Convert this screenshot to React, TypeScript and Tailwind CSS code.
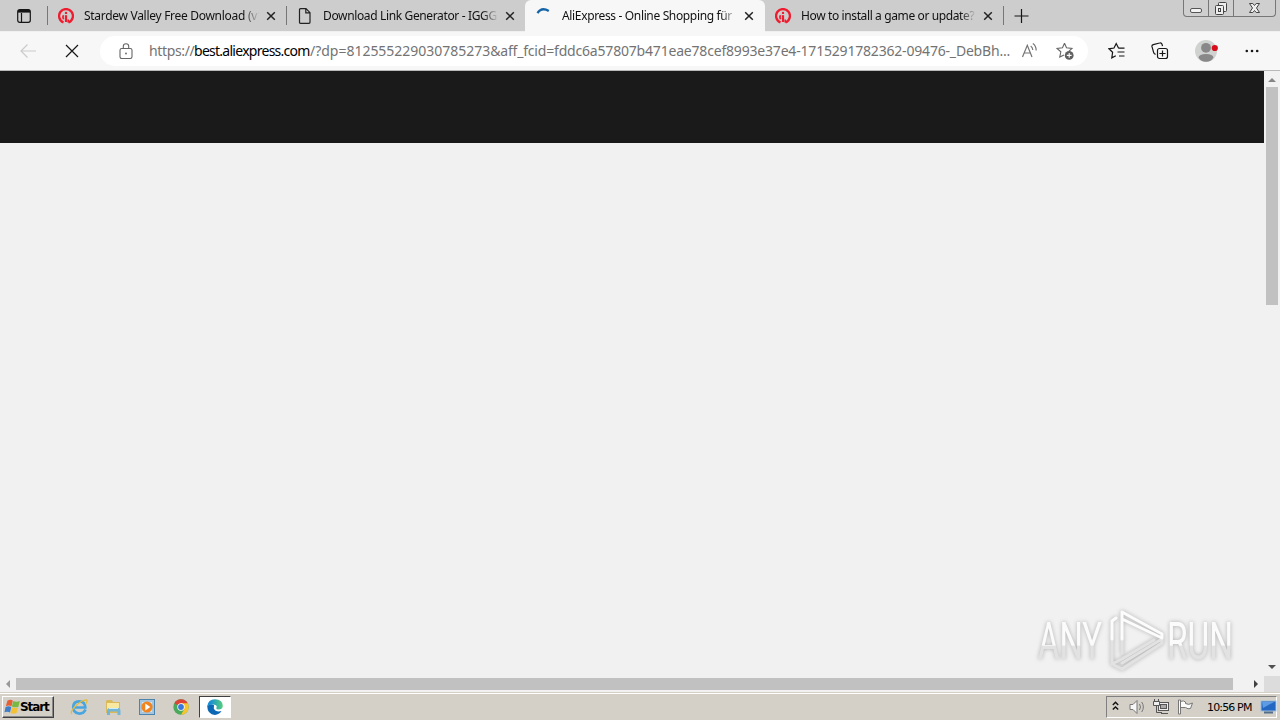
import React from 'react';

interface IconProps {
  className?: string;
}

const FONT = "font-['Noto_Sans','Open_Sans',sans-serif]";

const SiteLogo: React.FC = () => (
  <svg width="16" height="16" viewBox="0 0 16 16" className="shrink-0" fill="none" stroke="#ee1c2e">
    <path d="M5.500 14.400A6.900 6.900 0 1 1 10.500 14.400" strokeWidth="2.300" />
    <path d="M8 7.200V14" strokeWidth="2.200" />
    <path d="M5.600 7.300Q4.200 9 5.600 11.200M10.200 14.500V11.500" strokeWidth="1.600" />
    <circle cx="8" cy="4.900" r="1.200" fill="#ee1c2e" stroke="none" />
  </svg>
);

const PageIcon: React.FC = () => (
  <svg width="16" height="16" viewBox="0 0 16 16" className="shrink-0" fill="none" stroke="#222" strokeWidth="1.2">
    <path d="M3.500.7h5.500l4 4v9.600q0 1-1 1H3.500q-1 0-1-1V1.700q0-1 1-1zM8.800.8v4.100h4.200" />
  </svg>
);

const Spinner: React.FC = () => (
  <svg width="16" height="16" viewBox="0 0 16 16" className="shrink-0" fill="none" stroke="#1664a8" strokeWidth="2.4">
    <path d="M1.500 5.200Q5.500-1.300 12.800 3" />
  </svg>
);

const CloseIcon: React.FC = () => (
  <svg width="10" height="10" viewBox="0 0 10 10" className="shrink-0" stroke="#222" strokeWidth="1.5">
    <path d="M1.200 1.200l7.600 7.600M8.800 1.200L1.200 8.800" />
  </svg>
);

const StarIcon: React.FC<IconProps> = ({ className }) => (
  <svg width="18" height="18" viewBox="0 0 18 18" className={className} fill="none" stroke="#666" strokeWidth="1.1">
    <path d="M8.500 1.300l2 4.400 5.500.7-3.200 3M8.500 1.300l-2 4.400-5.500.7 3.800 3.400-1 5.300 4.200-2.200" />
    <circle cx="13.200" cy="13.400" r="4.400" fill="#606060" stroke="none" />
    <path d="M10.800 13.400h4.800M13.200 11v4.800" stroke="#fff" />
  </svg>
);

const FavoritesIcon: React.FC<IconProps> = ({ className }) => (
  <svg width="18" height="18" viewBox="0 0 18 18" className={className} fill="none" stroke="#161616" strokeWidth="1.2">
    <path d="M10.500 6.100l-2.300-4.600-2.200 4.500-5 .8 3.600 3.500-.8 5.500 4-2.100M10.300 6.100h6.200M9.500 10h7M11 14h5.500" />
  </svg>
);

const CollectionsIcon: React.FC<IconProps> = ({ className }) => (
  <svg width="18" height="18" viewBox="0 0 18 18" className={className} fill="none" stroke="#161616" strokeWidth="1.2">
    <rect x="6.500" y="6.500" width="10" height="10" rx="2" />
    <path d="M11.500 8.400v6.200M8.400 11.500h6.200M4.600 12.400q-1.700-.5-2-2L1 4.700q-.4-1.600 1.200-2.100L8.600 1q1.800-.5 2.400 1.200l.5 1.900" />
  </svg>
);

const ReadAloudIcon: React.FC<IconProps> = ({ className }) => (
  <svg width="18" height="18" viewBox="0 0 18 18" className={className} fill="none" stroke="#757575" strokeWidth="1.2">
    <path d="M1.500 15L6.300 3.300 11 15M3 11h6.600M9.700 3.900q2 1.300 2.100 4.200M11.800 1.600q3.200 2 3.400 6.800" />
  </svg>
);

interface TabProps {
  icon: React.ReactNode;
  title: string;
  className: string;
  titleClass: string;
}

const Tab: React.FC<TabProps> = ({ icon, title, className, titleClass }) => (
  <div className={`flex h-8 shrink-0 items-center ${className}`}>
    {icon}
    <div
      className={`ml-[10px] w-[177px] whitespace-nowrap text-[12px] leading-4 text-[#111] [mask-image:linear-gradient(to_right,black_90%,transparent_99%)] ${titleClass}`}
    >
      {title}
    </div>
    <div className="ml-[5px] flex">
      <CloseIcon />
    </div>
  </div>
);

const WindowControls: React.FC = () => (
  <div className="ml-auto mr-1 flex h-[17px] w-[93px] self-start rounded-b border border-t-0 border-[#777] bg-[#cfcfcf]">
    <div className="flex w-[25px] items-center justify-center border-r border-[#777]">
      <svg width="13" height="16" viewBox="0 0 13 16" className="shrink-0" fill="#f2f2f2" stroke="#555">
        <rect x=".5" y="8.500" width="11" height="4" rx="1.500" />
      </svg>
    </div>
    <div className="flex w-[25px] items-center justify-center border-r border-[#777]">
      <svg width="14" height="16" viewBox="0 0 14 16" className="shrink-0" fill="#eee" stroke="#444">
        <rect x="4.500" y="2.500" width="8" height="9" rx="1" />
        <rect x="1.500" y="5.500" width="8" height="9" rx="1" />
        <rect x="4.500" y="8.500" width="2" height="3" />
      </svg>
    </div>
    <div className="flex flex-1 items-center justify-center">
      <svg width="14" height="16" viewBox="0 0 14 16" className="shrink-0" fill="#eee" stroke="#444">
        <path d="M1.500 3.500h3.300L6.500 5.500l1.700-2h3.300L8.500 8l3 4.500H8.200l-1.700-2-1.700 2H1.500l3-4.500z" />
      </svg>
    </div>
  </div>
);

const Separator: React.FC = () => <div className="h-[19px] w-px shrink-0 bg-[#777]" />;

const TabStrip: React.FC = () => (
  <div className="flex h-8 items-center border-b border-[#f0f0f0] bg-[#cdcdcd]">
    <div className="flex w-[47px] shrink-0 items-center pl-[17px]">
      <svg width="14" height="14" viewBox="0 0 14 14" fill="none" stroke="#161616" strokeWidth="1.2">
        <rect x=".7" y=".7" width="12.600" height="12.600" rx="2" />
        <path d="M4.500 4v9" />
        <path d="M1 2.300h12" strokeWidth="2.600" />
      </svg>
    </div>
    <Separator />
    <Tab icon={<SiteLogo />} title="Stardew Valley Free Download (v1" className="w-[238px] pl-[10px]" titleClass="tracking-[-0.29px]" />
    <Separator />
    <Tab icon={<PageIcon />} title="Download Link Generator - IGGG" className="w-[238px] pl-[10px]" titleClass="tracking-[-0.36px]" />
    <Tab
      icon={<Spinner />}
      title="AliExpress - Online Shopping für"
      className="w-[240px] rounded-t-md bg-[#f7f7f7] pl-[11px]"
      titleClass="tracking-[-0.35px]"
    />
    <Tab icon={<SiteLogo />} title="How to install a game or update?" className="w-[238px] pl-[10px]" titleClass="tracking-[-0.38px]" />
    <Separator />
    <svg width="16" height="16" viewBox="0 0 16 16" className="ml-[10px] shrink-0" stroke="#161616" strokeWidth="1.2">
      <path d="M7.500 1v14M.5 8h14" />
    </svg>
    <WindowControls />
  </div>
);

const Toolbar: React.FC = () => (
  <div className="flex h-[39px] items-center border-b border-[#b9b9b9] bg-[#f7f7f7]">
    <svg width="18" height="16" viewBox="0 0 18 16" className="ml-5 shrink-0" fill="none" stroke="#cbcbcb" strokeWidth="1.2">
      <path d="M16 8H1M7.500 1.500L1 8l6.500 6.500" />
    </svg>
    <svg width="14" height="14" viewBox="0 0 14 14" className="ml-[27px] shrink-0" stroke="#161616" strokeWidth="1.2">
      <path d="M1 1l12 12M13 1L1 13" />
    </svg>
    <div className="ml-[21px] flex h-[30px] w-[988px] shrink-0 items-center rounded-full bg-white">
      <svg width="14" height="17" viewBox="0 0 14 17" className="ml-[19px] shrink-0" fill="none" stroke="#666" strokeWidth="1.1">
        <rect x="1" y="5.500" width="12" height="10" rx="1.700" />
        <path d="M4.300 5.500V3.200q0-2.400 2.700-2.400t2.700 2.400v2.300" />
        <circle cx="7" cy="10.500" r=".9" fill="#666" stroke="none" />
      </svg>
      <div className="ml-4 flex w-[872px] shrink-0 whitespace-nowrap text-[14px] leading-5 text-[#737373]">
        <span className="w-[45px] tracking-[-0.35px]">https://</span>
        <span className="w-[116px] tracking-[-0.73px] text-black">best.aliexpress.com</span>
        <span className="tracking-[-0.02px]">/?dp=812555229030785273</span>
        <span className="tracking-[-0.19px]">
          &amp;aff_fcid=fddc6a57807b471eae78cef8993e37e4-1715291782362-09476-_DebBh...
        </span>
      </div>
      <ReadAloudIcon className="shrink-0" />
      <StarIcon className="ml-[17px] shrink-0" />
    </div>
    <FavoritesIcon className="ml-5 shrink-0" />
    <CollectionsIcon className="ml-[25px] shrink-0" />
    <svg width="23" height="22" viewBox="0 0 23 22" className="ml-[26px] shrink-0">
      <circle cx="11" cy="11" r="11" fill="#d0d2d0" />
      <circle cx="11" cy="7.800" r="4.900" fill="#888" />
      <path d="M3.500 17.500Q4 14 11 14t7.500 3.500Q16 21.800 11 21.800T3.500 17.500z" fill="#888" />
      <circle cx="19.800" cy="8" r="3.100" fill="#d80d1c" />
    </svg>
    <svg width="14" height="4" viewBox="0 0 14 4" className="ml-[27px] shrink-0" fill="#161616">
      <circle cx="1.800" cy="2" r="1.300" />
      <circle cx="7" cy="2" r="1.300" />
      <circle cx="12.200" cy="2" r="1.300" />
    </svg>
  </div>
);

const Watermark: React.FC = () => (
  <svg
    width="212"
    height="74"
    viewBox="0 0 212 74"
    className="absolute bottom-px right-[18px] drop-shadow-[0_0_2px_rgba(0,0,0,0.28)]"
  >
    <defs>
      <linearGradient id="letters" x1="0" y1="0" x2="0" y2="1">
        <stop offset="0.56" stopColor="#fbfbfb" />
        <stop offset="0.58" stopColor="#e2e2e2" />
      </linearGradient>
    </defs>
    <g fill="url(#letters)" fontFamily="Roboto, sans-serif" fontSize="51">
      <text x="4" y="58" textLength="64" lengthAdjust="spacingAndGlyphs">ANY</text>
      <text x="133" y="58" textLength="66" lengthAdjust="spacingAndGlyphs">RUN</text>
    </g>
    <g fill="none" strokeLinejoin="round" strokeLinecap="round" strokeWidth="3">
      <path d="M78 36v27l10-5 32-19M128 38L88 62M128 38v4L88 68l-8-4M88 36v16" stroke="#e2e2e2" />
      <path d="M88 38V11l40 22v4L88 18M82 17l-4 3v18" stroke="#fcfcfc" />
    </g>
  </svg>
);

const Viewport: React.FC = () => (
  <div className="flex h-[621px] flex-col bg-[#f1f1f1]">
    <div className="flex h-[605px]">
      <div className="relative w-[1264px] bg-[#f1f1f1]">
        <div className="h-[72px] bg-[#1a1a1a]" />
        <Watermark />
      </div>
      <div className="flex w-4 flex-col items-center bg-[#f1f1f1]">
        <svg width="16" height="16" viewBox="0 0 16 16" fill="#858585">
          <path d="M4 11l4-4 4 4z" />
        </svg>
        <div className="h-[218px] w-3 bg-[#c1c1c1]" />
        <svg width="16" height="16" viewBox="0 0 16 16" className="mt-auto" fill="#505050">
          <path d="M4 5h8L8 9z" />
        </svg>
      </div>
    </div>
    <div className="flex h-4 items-center">
      <svg width="16" height="16" viewBox="0 0 16 16" fill="#999">
        <path d="M10 4v8L6 8z" />
      </svg>
      <div className="h-3 w-[1217px] bg-[#c1c1c1]" />
      <svg width="16" height="16" viewBox="0 0 16 16" className="ml-[15px]" fill="#404040">
        <path d="M6 4v8l4-4z" />
      </svg>
      <div className="h-4 w-4 bg-[#dcdcdc]" />
    </div>
  </div>
);

const Taskbar: React.FC = () => (
  <div className="flex h-7 items-center border-t border-[#d4d0c8] bg-[#d4d0c8] shadow-[inset_0_1px_0_#fff]">
    <div className="ml-[2px] mt-px flex h-[22px] w-[52px] shrink-0 items-center border border-b-[#404040] border-l-white border-r-[#404040] border-t-white pl-px shadow-[inset_-1px_-1px_0_#888]">
      <svg width="17" height="16" viewBox="0 0 16 16" className="shrink-0">
        <path d="M3 1.500q3-1.500 5.300 0L7 7.200Q4 5.700 1.300 7.200z" fill="#e66035" />
        <path d="M8.700 1.900q3 1.500 6.600.2l-1.500 5.800Q10 8.900 7.400 7.400z" fill="#79b943" />
        <path d="M1.100 7.900q3-1.300 5.700 0L5.500 13.600Q3 12.200 0 13.300z" fill="#3e7ec9" />
        <path d="M7.300 8.200q3 1.500 6.200.5l-1.500 5.300q-3 1.300-6 0z" fill="#f4c136" />
      </svg>
      <span className="-ml-px font-['DejaVu_Sans','Liberation_Sans',sans-serif] text-[12px] font-bold leading-4 tracking-[-1.1px] text-black">
        Start
      </span>
    </div>
    <svg width="18" height="18" viewBox="0 0 18 18" className="ml-4 shrink-0" fill="none">
      <path d="M15.500 11.500Q13.500 16 8.800 15.500 3 14.500 3.200 9T9 3.300q6.300 0 6.300 6.200H5" stroke="#48a5df" strokeWidth="2.700" />
      <path d="M2 16Q-.5 14 5.500 8T16.500 1.800Q18 2.800 15.500 6" stroke="#e4bc3d" strokeWidth="1.300" />
    </svg>
    <svg width="18" height="18" viewBox="0 0 18 18" className="ml-4 shrink-0">
      <path d="M2 3l1-1h5l1 2h7v11H2z" fill="#d9b95a" />
      <path d="M3 5h12v8H3z" fill="#f8e8a0" />
      <path d="M3 17v-4q0-3 3-3h8q2.500 0 2.500 3v4h-3v-3.500H6V17z" fill="#72b5d7" />
      <path d="M5 10.500h9" stroke="#c9eefb" />
    </svg>
    <svg width="16" height="16" viewBox="0 0 16 16" className="ml-[17px] shrink-0">
      <rect x=".5" y=".5" width="15" height="15" fill="#a5c6de" stroke="#4c84b0" />
      <path d="M3 3h10v10H3z" fill="#d3e4ef" />
      <circle cx="8" cy="8" r="5.600" fill="#f08420" />
      <path d="M6.300 4.500v7l5-3.500z" fill="#fff" />
    </svg>
    <svg width="16" height="16" viewBox="0 0 16 16" className="ml-[18px] shrink-0">
      <circle cx="8" cy="8" r="7.700" fill="#4aa95a" />
      <path d="M8 8L1.300 4.200A7.700 7.700 0 0 1 14.700 4.200z" fill="#dc4437" />
      <path d="M8 4.200h6.700A7.700 7.700 0 0 1 8 15.700L11.300 10z" fill="#f9c52c" />
      <circle cx="8" cy="8" r="3.700" fill="#fff" />
      <circle cx="8" cy="8" r="2.900" fill="#3979dd" />
    </svg>
    <div className="ml-[10px] mt-px flex h-[22px] w-8 shrink-0 items-center justify-center border border-b-white border-l-[#404040] border-r-white border-t-[#404040] bg-white">
      <svg width="16" height="16" viewBox="0 0 16 16">
        <defs>
          <linearGradient id="edge" x1="0" y1="0" x2="1" y2="0">
            <stop offset="0.2" stopColor="#198fd4" />
            <stop offset="1" stopColor="#55cf7a" />
          </linearGradient>
        </defs>
        <path d="M.2 7Q3 4 7 6L6.800 9.500q1.800 4 7.700 2.600Q12 15.900 8 15.900.4 15.500.2 7z" fill="#0c68b4" />
        <path d="M.2 7.300Q1 .3 8 .2q7.500.3 7.800 6.500 0 3.700-4.300 3.800-2.500 0-2.200-1.300Q11 6 6.500 5.400 2 5.200.2 7.300z" fill="url(#edge)" />
      </svg>
    </div>
    <div className="ml-auto mr-[3px] mt-px flex h-[22px] w-[171px] items-center border border-b-white border-l-[#808080] border-r-white border-t-[#808080]">
      <svg width="7" height="10" viewBox="0 0 7 10" className="mb-[3px] ml-[5px] shrink-0" fill="none" stroke="#111" strokeWidth="1.400">
        <path d="M.8 4l2.700-2.700L6.200 4M.8 8.600l2.700-2.700 2.700 2.700" />
      </svg>
      <svg width="18" height="16" viewBox="0 0 18 16" className="ml-[10px] shrink-0" fill="#f7f7f7" stroke="#777">
        <path d="M1 5.500h3l4-4v13l-4-4H1z" />
        <path d="M10.500 5q2 3 0 6M12.700 3q3.300 5 0 10" fill="none" />
      </svg>
      <svg width="18" height="16" viewBox="0 0 18 16" className="ml-[6px] shrink-0" fill="#eee" stroke="#555">
        <rect x="5.500" y="3.500" width="10" height="8" />
        <rect x="7.500" y="5.500" width="6" height="4" fill="#aaa" />
        <path d="M8 14.500h7M3.500 7v6.500H9M1.500 0v3M5.500 0v3" fill="none" />
        <path d="M.5 2.500h6v4h-6z" />
      </svg>
      <svg width="17" height="16" viewBox="0 0 17 16" className="ml-[6px] shrink-0" fill="#fafafa" stroke="#777">
        <path d="M1.500 1h2v14h-2zM3.500 2.500q3-1.500 5 .5v1.500q3 2 7-.500l-2 5.500q-2.500 1-5-1H3.500z" />
      </svg>
      <span className="ml-[13px] mt-px w-[46px] shrink-0 whitespace-nowrap font-['DejaVu_Sans','Liberation_Sans',sans-serif] text-[11px] leading-4 tracking-[-0.85px] text-black">
        10:56 PM
      </span>
      <svg width="17" height="14" viewBox="0 0 17 14" className="ml-[7px] shrink-0">
        <rect x="1" y="1" width="15" height="10" fill="#2467c2" stroke="#9cbddb" />
        <path d="M2 2h12L3 8z" fill="#5d9be4" />
        <path d="M4 12.500h9" stroke="#536d8b" strokeWidth="2" />
      </svg>
    </div>
  </div>
);

const App: React.FC = () => (
  <div className={`flex h-[720px] w-[1280px] flex-col overflow-hidden ${FONT}`}>
    <TabStrip />
    <Toolbar />
    <Viewport />
    <Taskbar />
  </div>
);

export default App;
